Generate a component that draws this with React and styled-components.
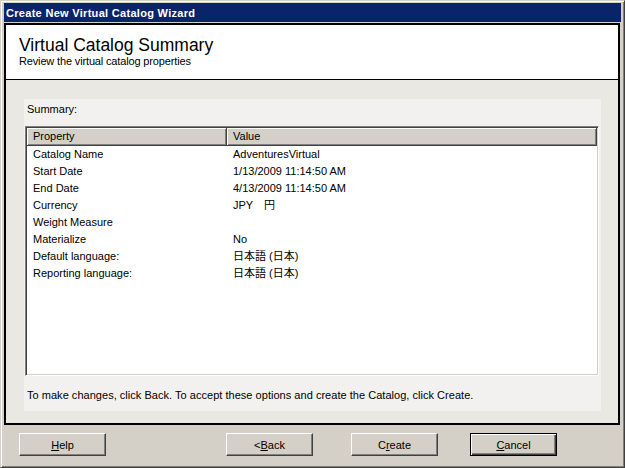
import styled, { createGlobalStyle } from 'styled-components';

const GlobalStyle = createGlobalStyle`
  html, body {
    margin: 0;
    padding: 0;
    background: #d4d0c8;
  }
  body {
    font-family: "Liberation Sans", Arial, "Noto Sans CJK JP", sans-serif;
    font-size: 11px;
    color: #000;
  }
`

const Window = styled.div`
  width: 625px;
  height: 468px;
  box-sizing: border-box;
  background: #d4d0c8;
  border: 1px solid;
  border-color: #d4d0c8 #404040 #404040 #d4d0c8;
  box-shadow: inset 1px 1px #fff, inset -1px -1px #808080;
  padding: 2px 3px 3px 3px;
  display: flex;
  flex-direction: column;
`

const TitleBar = styled.div`
  height: 19px;
  background: #0a246a;
  color: #fff;
  font-weight: bold;
  font-size: 11px;
  letter-spacing: 0.3px;
  padding-left: 2px;
  display: flex;
  align-items: center;
`

const Panel = styled.div`
  margin-top: 1px;
  margin-right: 1px;
  height: 402px;
  box-sizing: border-box;
  border: 2px solid #000;
  display: flex;
  flex-direction: column;
`

const Header = styled.div`
  height: 55px;
  box-sizing: border-box;
  background: #fff;
  border-bottom: 1px solid #000;
  padding: 11px 0 0 13px;
  flex-shrink: 0;
`

const Heading = styled.div`
  font-size: 17.5px;
  line-height: 19px;
`

const SubHeading = styled.div`
  font-size: 11px;
  line-height: 13px;
  letter-spacing: -0.15px;
`

const Body = styled.div`
  flex: 1;
  background: #eae8e3;
  padding: 19px 17px 0 18px;
`

const SummaryArea = styled.div`
  height: 312px;
  box-sizing: border-box;
  background: #f3f1ef;
  padding: 4px 2px 0 1px;
  display: flex;
  flex-direction: column;
`

const Label = styled.div`
  line-height: 13px;
  padding-left: 2px;
`

const ListBox = styled.div`
  margin-top: 10px;
  height: 250px;
  box-sizing: border-box;
  background: #fff;
  border: 1px solid;
  border-color: #808080 #fff #fff #808080;
  box-shadow: inset 1px 1px #404040, inset -1px -1px #d4d0c8;
  padding: 1px;
  display: flex;
  flex-direction: column;
`

const HeaderRow = styled.div`
  display: flex;
  height: 18px;
`

const HeaderCell = styled.div`
  box-sizing: border-box;
  width: ${p => (p.$width ? `${p.$width}px` : 'auto')};
  flex: ${p => (p.$width ? '0 0 auto' : '1')};
  background: #d4d0c8;
  border-right: 1px solid #404040;
  border-bottom: 1px solid #404040;
  box-shadow: inset 1px 1px #fff, inset -1px -1px #808080;
  padding-left: 6px;
  line-height: 17px;
`

const Row = styled.div`
  display: flex;
  height: 17px;
  line-height: 17px;
`

const Cell = styled.div`
  box-sizing: border-box;
  width: ${p => (p.$width ? `${p.$width}px` : 'auto')};
  flex: ${p => (p.$width ? '0 0 auto' : '1')};
  padding-left: 6px;
  white-space: pre;
`

const Note = styled.div`
  margin-top: 13px;
  line-height: 13px;
  padding-left: 2px;
  letter-spacing: 0.03px;
`

const ButtonBar = styled.div`
  display: flex;
  padding: 8px 0 0 15px;
`

const Button = styled.div`
  width: 87px;
  height: 23px;
  box-sizing: border-box;
  margin-left: ${p => p.$gap || 0}px;
  background: #d4d0c8;
  display: flex;
  align-items: center;
  justify-content: center;
  border: 1px solid;
  border-color: ${p => (p.$default ? '#000' : '#fff #404040 #404040 #fff')};
  box-shadow: ${p =>
    p.$default
      ? 'inset 1px 1px #fff, inset -1px -1px #404040, inset -2px -2px #808080'
      : 'inset -1px -1px #808080'};
  u {
    text-decoration: underline;
  }
`

const rows = [
  ['Catalog Name', 'AdventuresVirtual'],
  ['Start Date', '1/13/2009 11:14:50 AM'],
  ['End Date', '4/13/2009 11:14:50 AM'],
  ['Currency', 'JPY\u3000円'],
  ['Weight Measure', ''],
  ['Materialize', 'No'],
  ['Default language:', '日本語 (日本)'],
  ['Reporting language:', '日本語 (日本)'],
]

const App = () => {
  return (
    <>
      <GlobalStyle />
      <Window>
        <TitleBar>Create New Virtual Catalog Wizard</TitleBar>
        <Panel>
          <Header>
            <Heading>Virtual Catalog Summary</Heading>
            <SubHeading>Review the virtual catalog properties</SubHeading>
          </Header>
          <Body>
            <SummaryArea>
              <Label>Summary:</Label>
              <ListBox>
                <HeaderRow>
                  <HeaderCell $width={200}>Property</HeaderCell>
                  <HeaderCell>Value</HeaderCell>
                </HeaderRow>
                {rows.map(([name, value]) => (
                  <Row key={name}>
                    <Cell $width={200}>{name}</Cell>
                    <Cell>{value}</Cell>
                  </Row>
                ))}
              </ListBox>
              <Note>
                To make changes, click Back. To accept these options and create the Catalog, click Create.
              </Note>
            </SummaryArea>
          </Body>
        </Panel>
        <ButtonBar>
          <Button><span><u>H</u>elp</span></Button>
          <Button $gap={120}><span>&lt;<u>B</u>ack</span></Button>
          <Button $gap={38}><span>C<u>r</u>eate</span></Button>
          <Button $gap={32} $default><span><u>C</u>ancel</span></Button>
        </ButtonBar>
      </Window>
    </>
  )
}

export default App
